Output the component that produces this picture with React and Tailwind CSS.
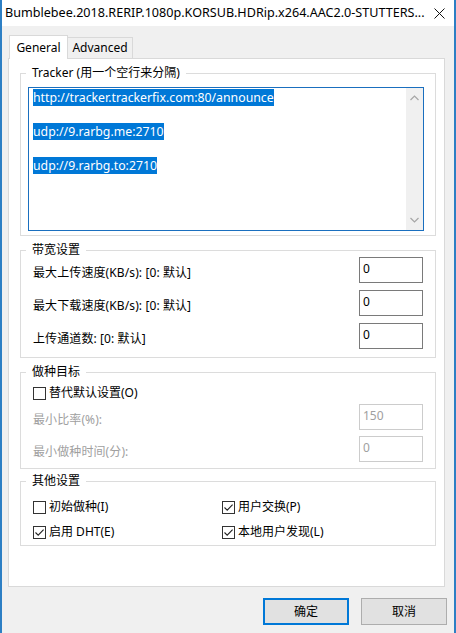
import React from 'react';

const FONT = { fontFamily: '"Noto Sans", "Noto Sans CJK SC", sans-serif' };

function Checkbox({ checked }) {
  return (
    <span className="w-[13px] h-[13px] border border-[#333333] bg-white flex items-center justify-center shrink-0">
      {checked && (
        <svg width="11" height="11" viewBox="0 0 11 11">
          <path d="M1.5 5.5 L4.2 8.2 L9.6 2.6" fill="none" stroke="#222" strokeWidth="1.1" />
        </svg>
      )}
    </span>
  );
}

function CheckItem({ label, checked }) {
  return (
    <div className="flex items-center gap-[3px] h-[16px]">
      <Checkbox checked={checked} />
      <span className="text-[12px] leading-[16px] text-black">{label}</span>
    </div>
  );
}

function Group({ title, children, className = '' }) {
  return (
    <fieldset className={`border border-[#dcdcdc] w-[416px] ${className}`}>
      <legend className="ml-[5px] px-[6px] text-[12px] leading-[16px] text-black">{title}</legend>
      {children}
    </fieldset>
  );
}

function NumberRow({ label, value, disabled }) {
  return (
    <div className="flex items-center justify-between h-[26px]">
      <span className={`mt-[6px] text-[12px] leading-[16px] tracking-[0.1px] ${disabled ? 'text-[#a0a0a0]' : 'text-black'}`}>{label}</span>
      <div
        className={`w-[64px] h-[26px] border bg-white px-[3px] pt-[3px] text-[12px] leading-[16px] ${
          disabled ? 'border-[#cccccc] text-[#a0a0a0]' : 'border-[#7a7a7a] text-black'
        }`}
      >
        {value}
      </div>
    </div>
  );
}

function Chevron({ up }) {
  return (
    <svg width="9" height="6" viewBox="0 0 9 6">
      <path d={up ? 'M0.5 5 L4.5 1 L8.5 5' : 'M0.5 1 L4.5 5 L8.5 1'} fill="none" stroke="#a6a6a6" strokeWidth="1.2" />
    </svg>
  );
}

export default function App() {
  const trackers = ['http://tracker.trackerfix.com:80/announce', '', 'udp://9.rarbg.me:2710', '', 'udp://9.rarbg.to:2710'];

  return (
    <div className="w-[456px] h-[633px] flex flex-col border-x-2 border-[#2d7fc4] bg-[#f0f0f0] overflow-hidden" style={FONT}>
      {/* Title bar */}
      <div className="h-[26px] bg-white flex items-center justify-between pl-[3px] pr-[9px] shrink-0">
        <span className="text-[12.6px] text-black whitespace-nowrap">
          Bumblebee.2018.RERIP.1080p.KORSUB.HDRip.x264.AAC2.0-STUTTERS...
        </span>
        <svg width="11" height="11" viewBox="0 0 11 11">
          <path d="M0.5 0.5 L10.5 10.5 M10.5 0.5 L0.5 10.5" stroke="#111" strokeWidth="1" />
        </svg>
      </div>

      <div className="flex-1 pl-[6px] pr-[7px] pt-[9px]">
        {/* Tabs */}
        <div className="flex items-start h-[24px] pl-[1px]">
          <div className="relative z-10 w-[59px] h-[24px] bg-white border border-b-0 border-[#d9d9d9] flex items-center justify-center text-[12px] text-black">
            General
          </div>
          <div className="mt-[2px] w-[65px] h-[21px] bg-[#f0f0f0] border border-l-0 border-b-0 border-[#d9d9d9] flex items-center justify-center text-[12px] text-black">
            Advanced
          </div>
        </div>

        {/* Panel */}
        <div className="-mt-px w-[437px] h-[529px] bg-white border border-[#d9d9d9] pl-[11px] pt-[6px]">
          <Group title="Tracker (用一个空行来分隔)">
            <div className="pl-[7px] pt-[6px] pb-[4px]">
              <div className="w-[396px] h-[144px] border border-[#1a6fbf] flex">
                <div className="flex-1 pl-[4px] pt-[1px] text-[12.3px] leading-[17px]">
                  {trackers.map((t, i) => (
                    <div key={i} className="h-[17px]">
                      {t && <span className="bg-[#0078d7] text-white">{t}</span>}
                    </div>
                  ))}
                </div>
                <div className="w-[17px] bg-[#f0f0f0] flex flex-col items-center justify-between py-[7px]">
                  <Chevron up />
                  <Chevron />
                </div>
              </div>
            </div>
          </Group>

          <Group title="带宽设置" className="mt-[6px]">
            <div className="-mt-px pl-[12px] pr-[12px] pb-[8px] flex flex-col gap-[7px]">
              <NumberRow label="最大上传速度(KB/s): [0: 默认]" value="0" />
              <NumberRow label="最大下载速度(KB/s): [0: 默认]" value="0" />
              <NumberRow label="上传通道数: [0: 默认]" value="0" />
            </div>
          </Group>

          <Group title="做种目标" className="mt-[6px]">
            <div className="pl-[12px] pr-[12px] pb-[6px] pt-[5px] flex flex-col">
              <CheckItem label="替代默认设置(O)" />
              <div className="mt-[3px] flex flex-col gap-[6px]">
                <NumberRow label="最小比率(%):" value="150" disabled />
                <NumberRow label="最小做种时间(分):" value="0" disabled />
              </div>
            </div>
          </Group>

          <Group title="其他设置" className="mt-[4px]">
            <div className="pl-[12px] pt-[10px] pb-[5px] grid grid-cols-[189px_1fr] gap-y-[9px]">
              <CheckItem label="初始做种(I)" />
              <CheckItem label="用户交换(P)" checked />
              <CheckItem label="启用 DHT(E)" checked />
              <CheckItem label="本地用户发现(L)" checked />
            </div>
          </Group>
        </div>

        {/* Buttons */}
        <div className="mt-[11px] flex justify-end gap-[12px]">
          <button className="w-[86px] h-[27px] border-2 border-[#0078d7] bg-[#e1e1e1] text-[12px] text-black">确定</button>
          <button className="w-[86px] h-[27px] border border-[#adadad] bg-[#e1e1e1] text-[12px] text-black">取消</button>
        </div>
      </div>
    </div>
  );
}
